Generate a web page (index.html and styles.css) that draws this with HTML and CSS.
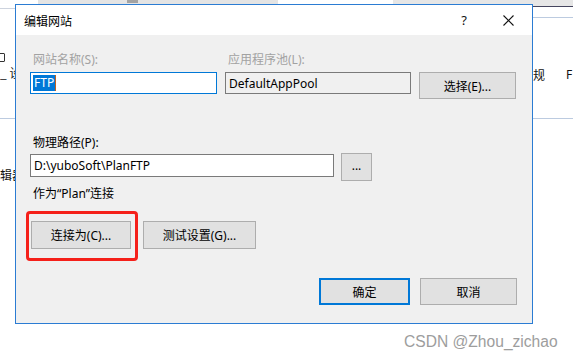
FILE: index.html
```html
<!DOCTYPE html>
<html lang="zh-CN">
<head>
<meta charset="utf-8">
<title>编辑网站</title>
<link rel="stylesheet" href="styles.css">
</head>
<body>
<div class="desktop">
  <div class="backdrop">
    <div class="strip s1"></div>
    <div class="strip s2"></div>
    <div class="strip s2dark"></div>
    <div class="strip s3"></div>
    <div class="strip s4"></div>
    <div class="rline dark"></div>
    <div class="hline l8"></div>
    <div class="hline r17"></div>
    <div class="hline l118"></div>
    <div class="hline r118"></div>
    <div class="chk"></div>
    <div class="frag f-she">_ 设</div>
    <div class="frag f-qi">辑器</div>
    <div class="frag f-gui">规</div>
    <div class="frag f-f">F</div>
  </div>

  <div class="dialog">
    <div class="titlebar">
      <span class="title">编辑网站</span>
      <span class="help">?</span>
      <span class="close">
        <svg width="11" height="11" viewBox="0 0 11 11"><path d="M0.5 0.5 L10.5 10.5 M10.5 0.5 L0.5 10.5" stroke="#111" stroke-width="1.1" fill="none"/></svg>
      </span>
    </div>
    <div class="content">
      <div class="top-grid">
        <div class="lbl disabled">网站名称(S):</div>
        <div class="lbl disabled">应用程序池(L):</div>
        <div></div>
        <div class="input focus"><span class="sel">FTP</span><span class="caret"></span></div>
        <div class="input ro">DefaultAppPool</div>
        <button class="btn select">选择(E)...</button>
      </div>
      <div class="lbl path-lbl">物理路径(P):</div>
      <div class="path-row">
        <div class="input path">D:\yuboSoft\PlanFTP</div>
        <button class="btn dots">...</button>
      </div>
      <div class="lbl conn">作为“Plan”连接</div>
      <div class="btn-row">
        <button class="btn connect">连接为(C)...</button>
        <button class="btn test">测试设置(G)...</button>
        <div class="annot"></div>
      </div>
      <div class="footer">
        <button class="btn ok">确定</button>
        <button class="btn cancel">取消</button>
      </div>
    </div>
  </div>

  <div class="watermark">CSDN @Zhou_zichao</div>
</div>
</body>
</html>
```

FILE: styles.css
```css
html, body {
  margin: 0;
  padding: 0;
  background: #ffffff;
}

.desktop {
  position: relative;
  width: 573px;
  height: 360px;
  overflow: hidden;
  font-family: "Noto Sans", "Noto Sans CJK SC", sans-serif;
  font-size: 12px;
  color: #000;
}

.backdrop {
  position: absolute;
  inset: 0;
}

.strip {
  position: absolute;
  top: 0;
  height: 5px;
}
.s1 { left: 0; width: 38px; background: #ffffff; }
.s2 { left: 38px; width: 240px; background: #e4e4e4; }
.s2dark { left: 127px; width: 11px; height: 3px; background: #a3a3a3; }
.s3 { left: 278px; width: 115px; background: #ffffff; }
.s4 { left: 393px; width: 180px; height: 6px; background: #e6e6e6; }

.rline.dark {
  position: absolute;
  left: 533px;
  top: 6px;
  width: 40px;
  height: 1px;
  background: #45455e;
}

.hline {
  position: absolute;
  height: 1px;
  background: #bccbe0;
}
.l8 { left: 0; top: 8px; width: 15px; background: #cdd3de; }
.r17 { left: 533px; top: 17px; width: 40px; }
.l118 { left: 0; top: 118px; width: 15px; }
.r118 { left: 533px; top: 118px; width: 40px; }

.chk {
  position: absolute;
  left: -4px;
  top: 53px;
  width: 7px;
  height: 7px;
  border: 1px solid #333;
  border-radius: 1px;
}

.frag {
  position: absolute;
  font-family: "Noto Sans CJK SC", sans-serif;
  font-size: 12px;
  line-height: 14px;
  color: #111;
  white-space: nowrap;
}
.f-she { left: 0; top: 66px; }
.f-qi { left: 0; top: 168px; }
.f-gui { left: 533px; top: 68px; }
.f-f { left: 566px; top: 68px; font-family: "Noto Sans", sans-serif; }

.dialog {
  position: absolute;
  left: 15px;
  top: 4px;
  width: 518px;
  height: 320px;
  box-sizing: border-box;
  border: 1px solid #2b7cd3;
  background: #f0f0f0;
  display: flex;
  flex-direction: column;
}

.titlebar {
  height: 30px;
  flex: none;
  background: #ffffff;
  display: flex;
  align-items: center;
  padding-left: 8px;
  position: relative;
}
.title {
  font-family: "Noto Sans CJK SC", sans-serif;
  font-size: 12px;
  color: #000;
}
.help {
  margin-left: auto;
  margin-right: 36px;
  font-family: "Noto Sans", sans-serif;
  font-size: 13px;
  line-height: 14px;
  color: #111;
}
.close {
  display: flex;
  margin-right: 18px;
}

.content {
  flex: 1;
  display: flex;
  flex-direction: column;
  padding: 17px 15px 18px 14px;
}

.lbl {
  line-height: 16px;
  height: 16px;
  padding-left: 3px;
  white-space: nowrap;
}
.lbl.disabled { color: #a2a2a2; }

.top-grid {
  display: grid;
  grid-template-columns: 187px 186px 97px;
  column-gap: 8px;
  row-gap: 4px;
  align-items: start;
}

.input {
  box-sizing: border-box;
  height: 22px;
  border: 1px solid #7a7a7a;
  background: #ffffff;
  display: flex;
  align-items: center;
  padding-left: 2px;
  white-space: nowrap;
  overflow: hidden;
}
.input.focus { border-color: #0078d7; }
.input.ro { background: #f0f0f0; padding-left: 3px; }
.sel {
  background: #0078d7;
  color: #ffffff;
  line-height: 16px;
  padding: 0 1px;
}
.caret {
  width: 1px;
  height: 16px;
  background: #c06020;
}

.btn {
  box-sizing: border-box;
  margin: 0;
  padding: 0;
  border: 1px solid #adadad;
  background: #e1e1e1;
  font-family: "Noto Sans", "Noto Sans CJK SC", sans-serif;
  font-size: 12px;
  color: #000;
  display: flex;
  align-items: center;
  justify-content: center;
}
.btn.select { width: 97px; height: 27px; }

.path-lbl { margin-top: 36px; }
.path-row {
  margin-top: 2px;
  display: flex;
  align-items: flex-start;
  gap: 7px;
}
.input.path {
  width: 304px;
  height: 23px;
  margin-top: 1px;
  padding-left: 3px;
}
.btn.dots {
  width: 31px;
  height: 28px;
  padding-bottom: 4px;
}

.conn { margin-top: 5px; }

.btn-row {
  position: relative;
  margin-top: 19px;
  margin-left: 1px;
  display: flex;
  gap: 12px;
}
.btn.connect { width: 100px; height: 28px; }
.btn.test { width: 113px; height: 28px; }
.annot {
  position: absolute;
  left: -5px;
  top: -10px;
  width: 112px;
  height: 50px;
  box-sizing: border-box;
  border: 3px solid #f5201a;
  border-radius: 4px;
}

.footer {
  margin-top: auto;
  display: flex;
  justify-content: flex-end;
  gap: 10px;
}
.btn.ok {
  width: 91px;
  height: 27px;
  border: 2px solid #0078d7;
}
.btn.cancel { width: 97px; height: 27px; }

.watermark {
  position: absolute;
  left: 404px;
  top: 333px;
  font-family: "Liberation Sans", sans-serif;
  font-size: 15.6px;
  line-height: 18px;
  color: #9d9d9d;
  white-space: nowrap;
}
```
